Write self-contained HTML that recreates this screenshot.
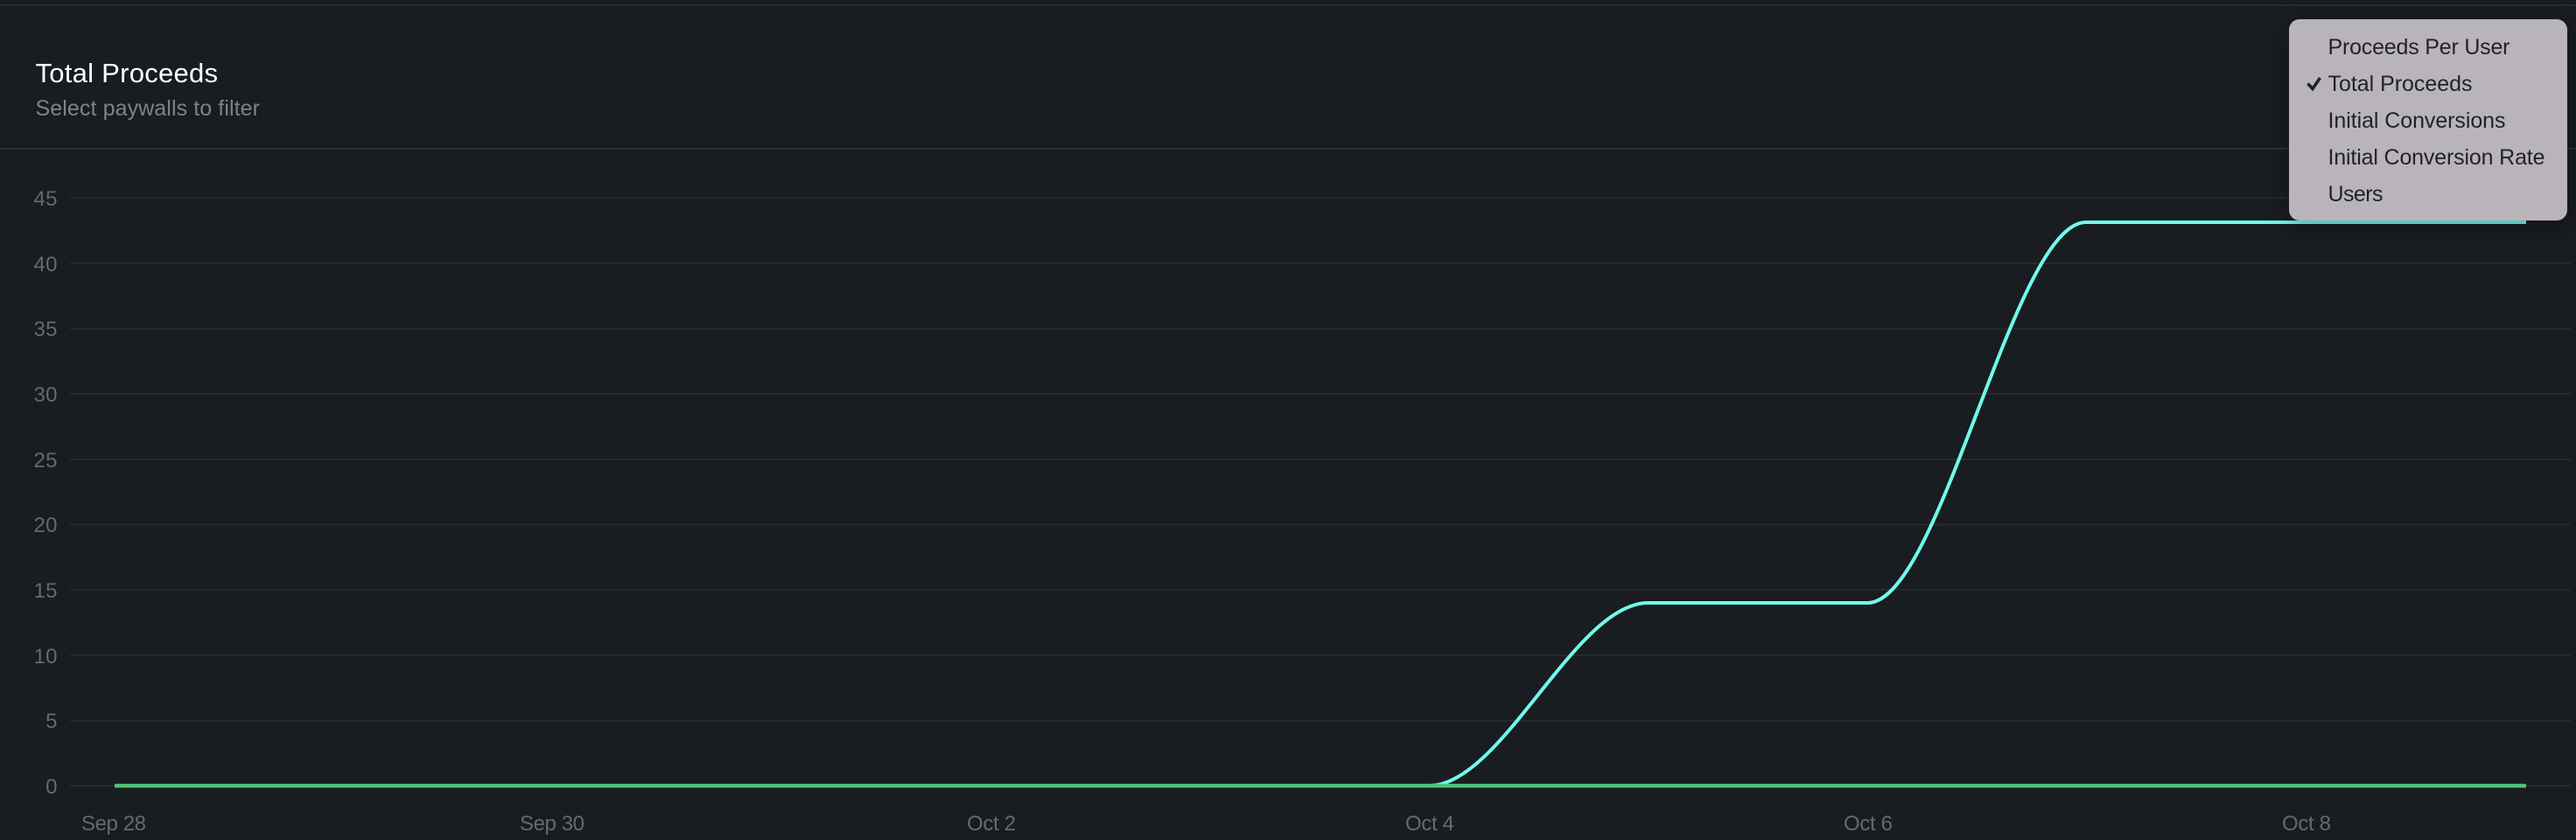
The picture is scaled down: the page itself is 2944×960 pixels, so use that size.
<!DOCTYPE html>
<html>
<head>
<meta charset="utf-8">
<style>
html,body{margin:0;padding:0;background:#191c20;width:2944px;height:960px;overflow:hidden}
svg{position:absolute;left:0;top:0;display:block}
text{font-family:"Liberation Sans",sans-serif}
.popup{position:absolute;left:2616px;top:22px;width:318px;height:230px;border-radius:12px;background:#b9b4b9;box-shadow:0 8px 26px rgba(0,0,0,.3)}
.g{stroke:#27292d;stroke-width:2}
.y{font-size:24px;fill:#666a6b;text-anchor:end}
.x{font-size:24px;fill:#666a6b;text-anchor:middle}
.m{font-size:25px;fill:#1f2328}
</style>
</head>
<body>
<svg width="2944" height="960" viewBox="0 0 2944 960">
<rect x="0" y="5" width="2944" height="2" fill="#282b2f"/>
<rect x="0" y="169" width="2944" height="2" fill="#2a2e31"/>
<text x="40.500" y="94" font-size="31" fill="#ffffff" textLength="208.500">Total Proceeds</text>
<text x="40.500" y="132" font-size="25" fill="#7f8385" textLength="256.500">Select paywalls to filter</text>

<line class="g" x1="80" x2="2938" y1="226" y2="226"/>
<line class="g" x1="80" x2="2938" y1="301" y2="301"/>
<line class="g" x1="80" x2="2938" y1="375.500" y2="375.500"/>
<line class="g" x1="80" x2="2938" y1="450" y2="450"/>
<line class="g" x1="80" x2="2938" y1="525" y2="525"/>
<line class="g" x1="80" x2="2938" y1="599.500" y2="599.500"/>
<line class="g" x1="80" x2="2938" y1="674" y2="674"/>
<line class="g" x1="80" x2="2938" y1="749" y2="749"/>
<line class="g" x1="80" x2="2938" y1="823.500" y2="823.500"/>
<line class="g" x1="80" x2="2938" y1="898" y2="898"/>

<text class="y" x="65.500" y="235" textLength="27">45</text>
<text class="y" x="65.500" y="310" textLength="27">40</text>
<text class="y" x="65.500" y="384" textLength="27">35</text>
<text class="y" x="65.500" y="459" textLength="27">30</text>
<text class="y" x="65.500" y="534" textLength="27">25</text>
<text class="y" x="65.500" y="608" textLength="27">20</text>
<text class="y" x="65.500" y="683" textLength="27">15</text>
<text class="y" x="65.500" y="758" textLength="27">10</text>
<text class="y" x="65.500" y="832" textLength="13">5</text>
<text class="y" x="65.500" y="907" textLength="13">0</text>

<text class="x" x="130" y="949" textLength="74">Sep 28</text>
<text class="x" x="631" y="949" textLength="74">Sep 30</text>
<text class="x" x="1133" y="949" textLength="56">Oct 2</text>
<text class="x" x="1634" y="949" textLength="56">Oct 4</text>
<text class="x" x="2135" y="949" textLength="56">Oct 6</text>
<text class="x" x="2636" y="949" textLength="56">Oct 8</text>

<path d="M131 898 L1633 898 C1716.500 898 1800 689 1883.500 689 L2134.500 689 C2218 689 2301 254 2384 254 L2887 254" fill="none" stroke="#6ffbec" stroke-width="4"/>
<line x1="131" x2="2887" y1="898" y2="898" stroke="#50c277" stroke-width="4.500"/>
</svg>
<div class="popup"></div>
<svg width="2944" height="960" viewBox="0 0 2944 960">
<text class="m" x="2660.500" y="62" textLength="208">Proceeds Per User</text>
<text class="m" x="2660.500" y="104" textLength="165">Total Proceeds</text>
<text class="m" x="2660.500" y="146" textLength="203">Initial Conversions</text>
<text class="m" x="2660.500" y="188" textLength="248">Initial Conversion Rate</text>
<text class="m" x="2660.500" y="230" textLength="63">Users</text>
<path d="M2637.500 95.500 L2643 101.500 L2651.500 89" fill="none" stroke="#1f2328" stroke-width="3.600"/>
</svg>
</body>
</html>
